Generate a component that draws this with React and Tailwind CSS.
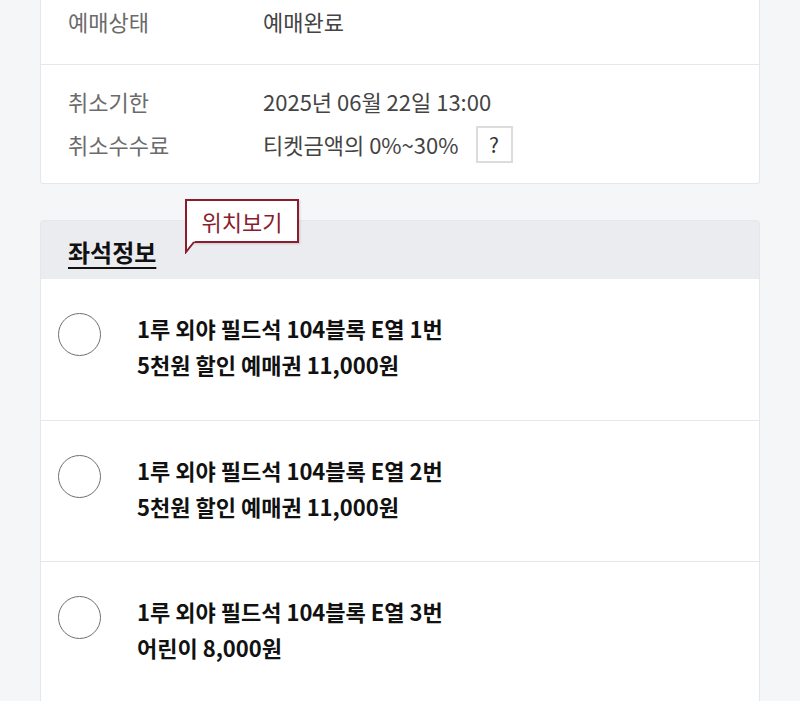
export default function App() {
  const font = { fontFamily: '"Noto Sans CJK KR", "Noto Sans", sans-serif' };
  const seats = [
    ["1루 외야 필드석 104블록 E열 1번", "5천원 할인 예매권 11,000원"],
    ["1루 외야 필드석 104블록 E열 2번", "5천원 할인 예매권 11,000원"],
    ["1루 외야 필드석 104블록 E열 3번", "어린이 8,000원"],
  ];
  return (
    <div className="w-[800px] h-[701px] overflow-hidden bg-[#f5f6f8] px-[40px]" style={font}>
      <div className="bg-white border border-t-0 border-[#e6e7ea] rounded-b-[3px]">
        <div className="flex px-[27px] pt-[6px] pb-[27px] text-[22px] leading-[31px]">
          <div className="w-[195px] text-[#6b6b6b]">예매상태</div>
          <div className="text-[#444]">예매완료</div>
        </div>
        <div className="border-t border-[#e6e7ea] px-[27px] pt-[15px] pb-[17px] text-[22px]">
          <div className="flex h-[43px] items-center">
            <div className="w-[195px] text-[#6b6b6b]">취소기한</div>
            <div className="text-[#444]">2025년 06월 22일 13:00</div>
          </div>
          <div className="flex h-[43px] items-center">
            <div className="w-[195px] text-[#6b6b6b]">취소수수료</div>
            <div className="text-[#444]">티켓금액의 0%~30%</div>
            <div className="ml-[17px] w-[37px] h-[37px] border-2 border-[#dcdcdc] flex items-center justify-center text-[21px] text-[#333]">?</div>
          </div>
        </div>
      </div>

      <div className="mt-[36px] bg-white border border-[#e6e7ea] rounded-t-[3px] relative">
        <div className="h-[58px] bg-[#ebecf0] flex items-center px-[27px]">
          <div className="text-[24px] font-bold text-[#111] underline underline-offset-[5px] decoration-[1.5px] pt-[4px]">좌석정보</div>
        </div>
        <div className="absolute left-[144px] top-[-22px]">
          <div className="relative w-[114px] h-[44px] border-2 border-[#8a1c2e] bg-white flex items-center justify-center text-[22px] text-[#8a1c2e] shadow-[1px_1px_2px_rgba(0,0,0,0.15)]">
            위치보기
          </div>
          <svg className="absolute left-0 top-[41px]" width="12" height="14" viewBox="0 0 12 14">
            <polygon points="1,0 1,12 10,1" fill="white" />
            <polyline points="1,0 1,12 9,2" fill="none" stroke="#8a1c2e" strokeWidth="2" />
          </svg>
        </div>
        {seats.map((s, i) => (
          <div key={i} className={`h-[141px] flex items-start px-[17px] pt-[34px] ${i > 0 ? "border-t border-[#e6e7ea]" : ""}`}>
            <div className="w-[43px] h-[43px] rounded-full border-[1.5px] border-[#6f6f6f] shrink-0"></div>
            <div className="ml-[36px] text-[22px] font-bold text-[#111] leading-[36px] mt-[-3px]">
              <div>{s[0]}</div>
              <div>{s[1]}</div>
            </div>
          </div>
        ))}
      </div>
    </div>
  );
}
